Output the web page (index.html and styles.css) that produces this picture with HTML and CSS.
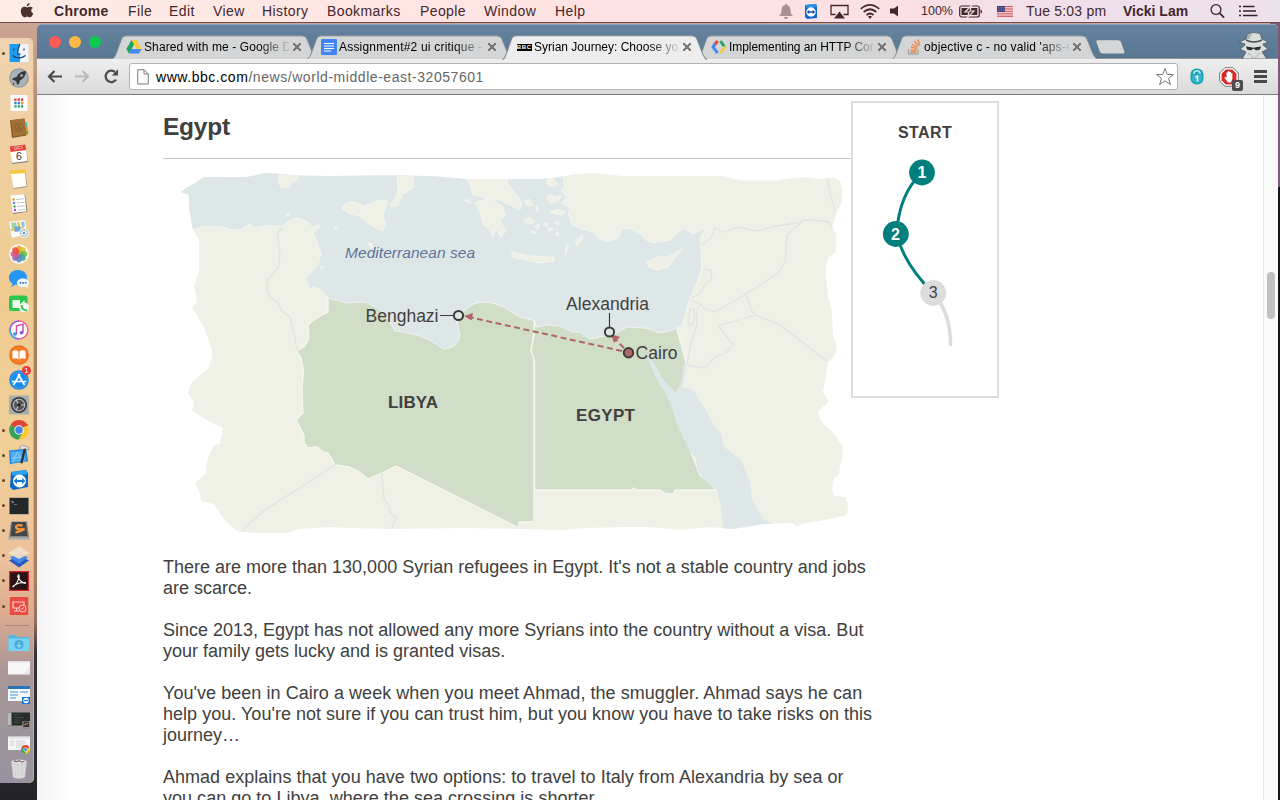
FILE: index.html
```html
<!DOCTYPE html>
<html lang="en">
<head>
<meta charset="utf-8">
<title>Syrian Journey: Choose your own escape route</title>
<link rel="stylesheet" href="styles.css">
</head>
<body>
<header class="menubar">
  <svg class="apple" width="14" height="17" viewBox="0 0 14 17"><path d="M9.6 1C9.7 2.700 8.300 4.300 6.800 4.200 6.700 2.600 8.100 1.200 9.600 1ZM12.900 6.100C10.400 7.600 10.900 10.500 13.300 11.500 12.700 13.200 11.500 15.400 10 15.400 9 15.400 8.700 14.800 7.400 14.800 6.100 14.800 5.600 15.400 4.700 15.400 2.700 15.300.7 11.800.8 8.800.9 6.100 2.600 4.700 4.400 4.700 5.600 4.700 6.400 5.400 7.300 5.400 8.200 5.400 9 4.600 10.500 4.700 11.500 4.800 12.300 5.200 12.900 6.100Z"/></svg>
  <nav class="menus"><b>Chrome</b><span>File</span><span>Edit</span><span>View</span><span>History</span><span>Bookmarks</span><span>People</span><span>Window</span><span>Help</span></nav>
  <div class="status">
    <svg width="16" height="17" viewBox="0 0 16 17" fill="#ab8f92"><path d="M8 1c1 0 1.300.6 1.300 1.300C11.500 3 12.500 5 12.500 7c0 3 .7 4.500 2.500 6H1c1.800-1.500 2.500-3 2.500-6 0-2 1-4 3.200-4.700C6.700 1.600 7 1 8 1ZM6 14h4c0 1.500-1 2-2 2s-2-.5-2-2Z"/></svg>
    <svg class="s-tv" width="14" height="17" viewBox="0 0 14 17"><path d="M1 2 12 1 13 3 13 15 3 16 1 14Z" fill="#1268cf"/><path d="M1 2 12 1 13 4 3 5Z" fill="#2592e6"/><circle cx="7" cy="9" r="4.700" fill="#fff"/><path d="m2.700 9 2.600-2v1.300h3.400V7l2.600 2-2.600 2V9.700H5.300V11Z" fill="#164a9e"/></svg>
    <svg class="s-air" width="19" height="17" viewBox="0 0 19 17"><path d="M5.500 11.500H1V2.500h17v9h-4.500" fill="none" stroke="#43272c" stroke-width="1.300"/><path d="m9.500 8.500 5.500 7H4Z" fill="#43272c"/></svg>
    <svg class="s-wifi" width="20" height="17" viewBox="0 0 20 17" fill="none" stroke="#43272c" stroke-width="1.700"><path d="M.8 5.800Q10-2.200 19.200 5.800M3.700 9Q10 3.500 16.300 9M6.500 12Q10 9 13.500 12"/><path d="m10 16-2-2.400q2-1.500 4 0Z" fill="#43272c" stroke="none"/></svg>
    <svg class="s-vol" width="10" height="14" viewBox="0 0 10 14"><path d="M0 4.500h4L8 1.500v11L4 9.500H0Z" fill="#43272c"/></svg>
    <span class="pct">100%</span>
    <svg class="s-bat" width="24" height="13" viewBox="0 0 24 13"><rect x=".7" y="1" width="19.600" height="11" rx="2" fill="none" stroke="#43272c" stroke-width="1.200"/><path d="M2.500 3h15.800v7H2.500Z" fill="#43272c"/><path d="M21.500 4.500c2 .3 2 3.700 0 4Z" fill="#43272c"/><path d="m12.500.5-6.500 6.500h4L8.500 12.500 15 6h-4Z" fill="#43272c" stroke="#f1dfe6" stroke-width="1.200"/></svg>
    <svg class="s-flag" width="16" height="11" viewBox="0 0 16 11"><path fill="#fff" d="M0 0h16v11H0z"/><path stroke="#c8434c" stroke-width=".9" d="M0 .5h16M0 2.200h16M0 3.900h16M0 5.600h16M0 7.300h16M0 9h16M0 10.600h16"/><path fill="#40427c" d="M0 0h8v6H0z"/><path d="M1 1.500h7M1 3h7M1 4.500h7" stroke="#9d9ebf" stroke-width=".6" stroke-dasharray=".8 .8"/></svg>
    <span class="clock">Tue 5:03 pm</span>
    <b class="user">Vicki Lam</b>
    <svg class="s-find" width="16" height="16" viewBox="0 0 16 16" fill="none" stroke="#43272c"><circle cx="6" cy="6.500" r="4.900" stroke-width="1.300"/><path d="m9.600 10.100 4.500 4.500" stroke-width="1.800"/></svg>
    <svg class="s-list" width="19" height="12" viewBox="0 0 19 12" stroke="#33222b" stroke-width="1.700"><path d="M0 1.500h2M0 6h2M0 10.500h2M4 1.500h11.500M4 6h13M4 10.500h14.500"/></svg>
  </div>
</header>
<div class="desktop">
  <aside class="dock">
    <div class="apps">
      <i class="on"><svg viewBox="0 0 20 20"><path fill="#eef4fb" d="M.5 1h19v18H.5z"/><path fill="#1d9bf0" d="M.5 1H11Q8.500 6 8.700 11H11v8H.5z"/><path d="M5 5.500v2M15 5.500v2M3.500 12.500Q10 17.500 16.500 12.500M11 1Q8.500 6 8.700 11H11.500" fill="none" stroke="#17385e" stroke-width="1.100"/></svg></i>
      <i><svg viewBox="0 0 20 20"><circle cx="10" cy="10" r="9.800" fill="#8e969a"/><circle cx="10" cy="10" r="8.700" fill="#a9b2b6"/><path d="M17 3c-5 0-8 3-9.500 6L4 10l-.8 2L6 12.500 7.500 14l.5 2.800 2-.8 1-3.500C14 11 16.800 8 17 3ZM6 14l-2 1.500V18z" fill="#35393c"/><circle cx="12.500" cy="7.500" r="1.300" fill="#b8bec1"/></svg></i>
      <i><svg viewBox="0 0 20 20"><rect x="1.500" y="2" width="17" height="16" rx="1" fill="#fff"/><path stroke="#e1322c" stroke-width="2.300" stroke-dasharray="2.300 1" d="M5.300 6.700h9.200"/><path stroke="#3478bf" stroke-width="2.300" stroke-dasharray="2.300 1" d="M5.300 10h9.200"/><path stroke="#22a565" stroke-width="2.300" stroke-dasharray="2.300 1" d="M5.300 13.300h9.200"/><path fill="#f6a21b" d="M12 8.900h2.300v2.300H12z"/></svg></i>
      <i><svg viewBox="0 0 20 20"><path fill="#57b8c9" d="m16 4 2 .3.500 5-2 .2z"/><path fill="#f08c3a" d="m16.500 9 2.200.2.500 5-2 .2z"/><path fill="#5fb345" d="m17 13 2 .2.200 3-2 .3z"/><path fill="#88592a" d="m1 2.200 14.500-1.700 2 17L3 20z"/><path fill="#a37238" d="m2.500 2 13-1.500 2 16L4 18.500z"/><circle cx="9.800" cy="9.300" r="4" fill="none" stroke="#8a6030"/><path d="M7.500 12q2.300-4 4.600 0M9.800 7v2.500" stroke="#8a6030" fill="none" stroke-width="1.500"/></svg></i>
      <i><svg viewBox="0 0 20 20"><path fill="#7c7770" d="m2 6 15-2 2 14-16 2z"/><path fill="#fcfcfc" d="m1 5 16-2 1.500 14L3 19z"/><path fill="#e4413e" d="m.8 2.500 15.500-2 .9 5.500-15.700 2z"/><text x="7" y="16" font-size="10.500" fill="#333">6</text><text x="5" y="5.500" font-size="4.500" fill="#fff" transform="rotate(-5 7 5)">OCT</text></svg></i>
      <i><svg viewBox="0 0 20 20"><path fill="#a8a291" d="m2 3 14-2 2.500 17-14 2z"/><path fill="#fffef8" d="m1.500 3 14-2 2 16-13 2z"/><path fill="#f6c63d" d="m1 1.700 15-1.200.5 3.500L1.500 5z"/></svg></i>
      <i><svg viewBox="0 0 20 20"><path fill="#77756f" d="m2 2 14-1.500 2.500 17L4 20z"/><path fill="#fff" d="m1.500 1.500 14-1.200 2 17L3.500 19z"/><path stroke="#c6c6c6" d="m7 5.500 8-.7M7.500 9l8-.7M8 12.500l8-.7M8.500 16l8-.7"/><g><circle cx="4.500" cy="5.500" r="1.200" fill="#f19027"/><circle cx="5" cy="9" r="1.200" fill="#3d82d8"/><circle cx="5.500" cy="12.500" r="1.200" fill="#4bad4b"/><circle cx="6" cy="16" r="1.200" fill="#a14dcd"/></g></svg></i>
      <i><svg viewBox="0 0 20 20"><path fill="#fafafa" d="m0 3 16-2 2 14-15 4z"/><path fill="#9fd3a0" d="m2 4 5-.7 1 5-5 1z"/><path stroke="#f3c547" stroke-width="2.300" d="m2 11 13-2M9 3l4 14"/><path fill="#69a9df" d="m5 8 6-1 1 5-6 1z"/><path fill="#8bc1eb" d="m12 3 3-.5 1 5-3 .5z"/><circle cx="15" cy="14" r="5" fill="#eef0f2"/><circle cx="15" cy="14" r="3.300" fill="none" stroke="#6f91b4" stroke-dasharray="1.500 .7"/><circle cx="15" cy="14" r="1.200" fill="#6391c6"/></svg></i>
      <i><svg viewBox="0 0 20 20"><circle cx="10" cy="10" r="9.800" fill="#fdfdfd"/><g fill-opacity=".88"><ellipse cx="10" cy="5.500" rx="3" ry="4" fill="#f59a22"/><ellipse cx="10" cy="5.500" rx="3" ry="4" fill="#d8c82b" transform="rotate(45 10 10)"/><ellipse cx="10" cy="5.500" rx="3" ry="4" fill="#77b73c" transform="rotate(90 10 10)"/><ellipse cx="10" cy="5.500" rx="3" ry="4" fill="#3fa98c" transform="rotate(135 10 10)"/><ellipse cx="10" cy="5.500" rx="3" ry="4" fill="#5487c5" transform="rotate(180 10 10)"/><ellipse cx="10" cy="5.500" rx="3" ry="4" fill="#9168b2" transform="rotate(225 10 10)"/><ellipse cx="10" cy="5.500" rx="3" ry="4" fill="#d5598c" transform="rotate(270 10 10)"/><ellipse cx="10" cy="5.500" rx="3" ry="4" fill="#ec4f3b" transform="rotate(315 10 10)"/></g></svg></i>
      <i><svg viewBox="0 0 20 20"><path d="M9 1c5 0 9 3 9 7.500S14 16 9 16q-1.500 0-2.700-.4L2.500 18l1-3.500C1 13 0 11 0 8.500 0 4 4 1 9 1Z" fill="#2596f1"/><path d="M14 9.500c3.300 0 6 1.800 6 4.300 0 1.200-.6 2.200-1.500 3l.5 2.500-3-1.500q-1 .3-2 .3c-3.300 0-6-1.800-6-4.300s2.700-4.300 6-4.300Z" fill="#f2f7fd"/><path d="M10.500 13.800h7" stroke="#367ac2" stroke-width="1.700" stroke-dasharray="1.700 1"/></svg></i>
      <i><svg viewBox="0 0 20 20"><rect y="1.500" width="18.500" height="15.500" rx="3" fill="#27c84b"/><path d="M3.500 6H11v8H3.500zM12 9.500 15.500 6v5z" fill="#ecfaef"/><circle cx="15" cy="13.500" r="5" fill="#f4f7f4"/><path d="M12.500 11q0 5 5.500 5.500" stroke="#37c455" stroke-width="1.800" fill="none"/></svg></i>
      <i><svg viewBox="0 0 20 20"><circle cx="10" cy="10" r="9" fill="#fff" stroke="#ef5c98" stroke-width="1.400"/><path d="M10 1a9 9 0 0 0 0 18" fill="none" stroke="#8b66dc" stroke-width="1.500"/><path d="M1 10a9 9 0 0 0 5 8" fill="none" stroke="#3cb5e8" stroke-width="1.500"/><path d="M7.500 14V5.800l6.500-1.500V12.500" fill="none" stroke="#d54fae" stroke-width="1.500"/><ellipse cx="6" cy="14" rx="2" ry="1.700" fill="#478fe8"/><ellipse cx="12.500" cy="12.800" rx="2" ry="1.700" fill="#845fe0"/></svg></i>
      <i><svg viewBox="0 0 20 20"><circle cx="10" cy="10" r="9.800" fill="#df681e"/><circle cx="10" cy="10" r="8.800" fill="#fa7e21"/><path d="M3.500 6Q7 4.500 9.500 6.500v8Q7 12.500 3.500 14ZM16.500 6Q13 4.500 10.500 6.500v8Q13 12.500 16.500 14Z" fill="#fff"/></svg></i>
      <i><svg viewBox="0 0 20 20"><circle cx="10" cy="10" r="9.800" fill="#1b83e5"/><circle cx="10" cy="10" r="8" fill="#168bec" stroke="#62b5f4" stroke-width=".6"/><path d="m11 4-6.500 11M9 4l6.500 11M3 11.500h14" stroke="#fff" stroke-width="1.700"/></svg><em>1</em></i>
      <i><svg viewBox="0 0 20 20"><path fill="#a9adae" d="M0 .5h20v19H0z"/><circle cx="10" cy="10" r="8" fill="#333638"/><circle cx="10" cy="10" r="5.800" fill="#555" stroke="#b0b2b3" stroke-width="1.300"/><path d="m10 10-3-5M10 10l6 0M10 10l-3 5" stroke="#c8caca" stroke-width="1.200"/><circle cx="10" cy="10" r="1.800" fill="#222"/></svg></i>
      <i class="on"><svg viewBox="0 0 20 20"><circle cx="10" cy="10" r="9.800" fill="#fbcb2d"/><path d="M10 10 1.500 5A9.800 9.800 0 0 1 18.500 5Z" fill="#dd4638"/><path d="M10 10 1.500 5A9.800 9.800 0 0 0 9.500 19.800L14 12Z" fill="#35a35a"/><path d="M10 5h8.500" stroke="#dd4638" stroke-width="2"/><circle cx="10" cy="10" r="4.700" fill="#f5f5f3"/><circle cx="10" cy="10" r="3.700" fill="#4284e6"/></svg></i>
      <i class="on"><svg viewBox="0 0 22 20"><path fill="#1987de" d="m0 5 19-2 2 14L1 20z"/><path fill="#50aef1" d="m1.500 6.500 16-1.500 1 11.500-16 2z"/><path d="m4 18 5-11 6 9M3 13.500l14-1.500" stroke="#a4d7f9" stroke-width=".8" fill="none"/><path d="m17.500 3-4 16" stroke="#2d3136" stroke-width="2.600"/><path d="m11 2 4-2.500 6.500 2 .5 3-4-1.500L14 4z" fill="#e4e6e7" stroke="#656a6d" stroke-width=".6"/></svg></i>
      <i class="on"><svg viewBox="0 0 20 20"><path fill="#0868c7" d="M2 2 17 0l2 3v14L4 20l-3-3z"/><path fill="#2ba3ee" d="m2 2 15-2 2 4L4 6z"/><circle cx="10.500" cy="11" r="6.500" fill="#fff"/><path d="m4.500 11 3.500-3v2h5V8l3.500 3-3.500 3v-2H8v2z" fill="#147bd1"/></svg></i>
      <i class="on"><svg viewBox="0 0 20 20"><path fill="#92928c" d="M0 1.500h20v17H0z"/><path fill="#242728" d="M.8 2h18.400v16H.8z"/><text x="2" y="7.500" font-size="5" fill="#eee">&gt;_</text></svg></i>
      <i class="on"><svg viewBox="0 0 20 20"><path fill="#8b8983" d="M2 .5h16l2.500 18.500H-.5z"/><path fill="#b7b4ad" d="M0 16.500h20l.5 2.500H-.5z"/><path fill="#44474a" d="M3 1h14l1.500 14h-17z"/><path d="M13.500 4.700Q7 3.300 7 6t6 2.200-6.500 3.300" fill="none" stroke="#f7933a" stroke-width="2.300"/></svg></i>
      <i class="on"><svg viewBox="0 0 20 20"><path fill="#245ac2" d="m0 14.500 10-5 10 5-10 7z"/><path fill="#4589e8" d="m1 11.500 9-5 9 5-9 6z"/><path fill="#f1dfc7" fill-opacity=".95" d="m-1 7 11-7 11 7-11 6z"/></svg></i>
      <i class="on"><svg viewBox="0 0 20 20"><path fill="#dc2233" d="M0 0h20v20H0z"/><path fill="#281315" d="M1.200 1.200h17.600v17.600H1.200z"/><path d="M9 4c2.500-1 1 7-4.500 11.500C2 17 7 11 16 11.500c3 1.500-5 1.500-7.500-7" fill="none" stroke="#fff" stroke-width="1.100"/></svg></i>
      <i class="on"><svg viewBox="0 0 20 20"><path fill="#e94b43" d="M.8 1h18.400v18H.8z"/><path d="M10 12H4V6h11v3M5 15h5M7.500 12v3" fill="none" stroke="#ffd0c8" stroke-width="1.200"/><circle cx="13.500" cy="12.500" r="3.500" fill="none" stroke="#ffd0c8"/><path d="m12 13.500 3-2" stroke="#ffd0c8"/></svg></i>
    </div>
    <hr>
    <div class="apps stacks">
      <i><svg viewBox="0 0 22 20"><path fill="#53b6df" d="M.5 2h7l2 2h12v14H.5z"/><path fill="#78d2f3" d="M.5 5.500h21V18H.5z"/><circle cx="11" cy="11.500" r="4.500" fill="#47abd5"/><path d="M11 9v5M8.800 12 11 14.200 13.200 12" stroke="#92dcf5" fill="none" stroke-width="1.200"/></svg></i>
      <i><svg viewBox="0 0 22 20"><path fill="#f7f7f8" d="M0 3h22v13.500H0z"/><path fill="#dde1e6" d="M0 3h22v1.500H0z"/><path d="M13 16q5-1 9-8v8Z" fill="#e8e8ea"/></svg></i>
      <i><svg viewBox="0 0 22 20"><path fill="#f5f9fc" d="M0 2h22v15H0z"/><path fill="#2b75bd" d="M0 2h22v3H0z"/><path d="M2 8h8M2 11h8M12 8h8M2 14h6" stroke="#83b4de" stroke-width="1.400"/><path fill="#1776d5" d="M14 13h8v7h-8z"/><circle cx="18" cy="16.500" r="2.700" fill="#fff"/><path d="M16 16.500h4" stroke="#1776d5" stroke-width="1.200"/></svg></i>
      <i><svg viewBox="0 0 22 20"><path fill="#262c29" d="M0 3.500h22v13H0z"/><path fill="#b9bbb8" d="M0 3.500h3.500v13H0z"/><path d="M6 6h6M6 8.500h10M6 11h7M6 13.500h5" stroke="#4d5749" stroke-width=".8"/><path fill="#8b8b8b" d="M14.500 12H22v8h-8z"/><path fill="#373737" d="M15.500 12.500h5.500v5.500h-5.500z"/><path d="m16.500 15.500 3.500-1" stroke="#ec9042"/></svg></i>
      <i><svg viewBox="0 0 22 20"><path fill="#f4f4f4" d="M0 2.500h22v13.500H0z"/><path d="M1 4h20" stroke="#d5d9e1"/><path d="M2 7h4M2 9h4M2 11h4M8 7h9M8 9h10M8 11h8M8 13h6" stroke="#c5c5c5" stroke-width=".7"/><circle cx="17.500" cy="15.500" r="4.300" fill="#efc431"/><path d="M13.600 13.500a4.300 4.300 0 0 1 7.800 0l-3.900 2Z" fill="#dc4437"/><path d="M13.600 13.500a4.300 4.300 0 0 0 3.400 6.300l.5-4.300Z" fill="#39a05a"/><circle cx="17.500" cy="15.500" r="1.800" fill="#4482dc" stroke="#fff" stroke-width=".6"/></svg></i>
      <i><svg class="bin" viewBox="0 0 20 22"><path d="M1.500 3h17l-2 17.500q-6.500 2.500-13 0Z" fill="#dedddd" stroke="#b9b7b9" stroke-width=".7"/><path d="m5 5 1 14M9 5v15M13 5l-1 15M16 5l-2 14" stroke="#cbcacb" stroke-width=".8"/><ellipse cx="10" cy="3" rx="8.500" ry="2.500" fill="#f0efef" stroke="#aaa" stroke-width=".5"/><path d="m4 3 2-1 2 1 2-1.500 3 2 3-1" stroke="#7a6262" fill="none" stroke-width="1.200"/></svg></i>
    </div>
  </aside>
  <main class="window">
    <div class="tabstrip">
      <div class="lights"><i class="r"></i><i class="y"></i><i class="g"></i></div>
      <div class="tabs">
        <div class="tab"><svg class="shape" viewBox="0 0 205 24" preserveAspectRatio="none"><path d="M.5 24Q3 22 4 19L9.500 4Q10.500.8 14 .8H190Q193.500.8 195 4L201 19Q202.500 22 205 24"/></svg>
          <svg class="fav" viewBox="0 0 16 16"><path d="M5.500 1h5l5 9h-5z" fill="#f9ce34"/><path d="m5.500 1 2.600 4.500L3 14.500.4 10z" fill="#1da362"/><path d="M5.500 10H15.600L13 14.500H3z" fill="#4688f4"/></svg><span class="t1">Shared with me - Google D</span><b class="x"></b></div>
        <div class="tab"><svg class="shape" viewBox="0 0 205 24" preserveAspectRatio="none"><path d="M.5 24Q3 22 4 19L9.500 4Q10.500.8 14 .8H190Q193.500.8 195 4L201 19Q202.500 22 205 24"/></svg>
          <svg class="fav" viewBox="0 0 16 16"><rect width="16" height="16" rx="1" fill="#4286f5"/><path d="M3 4.500h10M3 7h10M3 9.500h10M3 12h7" stroke="#fff" stroke-width="1.200"/></svg><span class="t2">Assignment#2 ui critique -</span><b class="x"></b></div>
        <div class="tab active"><svg class="shape" viewBox="0 0 205 24" preserveAspectRatio="none"><path d="M.5 24Q3 22 4 19L9.500 4Q10.500.8 14 .8H190Q193.500.8 195 4L201 19Q202.500 22 205 24"/></svg>
          <span class="fav bbc"><u>B</u><u>B</u><u>C</u></span><span class="t3">Syrian Journey: Choose yo</span><b class="x"></b></div>
        <div class="tab"><svg class="shape" viewBox="0 0 205 24" preserveAspectRatio="none"><path d="M.5 24Q3 22 4 19L9.500 4Q10.500.8 14 .8H190Q193.500.8 195 4L201 19Q202.500 22 205 24"/></svg>
          <svg class="fav" viewBox="0 0 16 16" fill="none" stroke-width="3"><path d="M6.500 2 3.500 6" stroke="#e34c3c"/><path d="M4 5 2 8 6.500 14" stroke="#4a88ee"/><path d="M9.500 2 13.500 8" stroke="#23a566"/><path d="M14 7.500 9.500 14" stroke="#f5c840"/></svg><span class="t4">Implementing an HTTP Cor</span><b class="x"></b></div>
        <div class="tab"><svg class="shape" viewBox="0 0 205 24" preserveAspectRatio="none"><path d="M.5 24Q3 22 4 19L9.500 4Q10.500.8 14 .8H190Q193.500.8 195 4L201 19Q202.500 22 205 24"/></svg>
          <svg class="fav" viewBox="0 0 16 16" fill="none"><path d="M2.500 10v5h9.500v-5" stroke="#a5a6a9" stroke-width="1.400"/><path d="M4.500 13h6M4.500 10.800l6 .5M5 8l6 1.700M6 5.200l5.500 3M8.500 2.200l4 5M12 .5l1.500 6" stroke="#ed833a" stroke-width="1.300"/></svg><span class="t5">objective c - no valid 'aps-e</span><b class="x"></b></div>
        <svg class="newtab" width="31" height="16" viewBox="0 0 31 16"><path d="M3 .7H23Q25.500.7 26.500 3L30 13Q30.500 15 28 15H8Q5.500 15 4.500 13L.8 3Q0 .7 3 .7Z" fill="#d5d6d7" stroke="#60768a"/></svg>
      </div>
      <svg class="incognito" width="34" height="28" viewBox="0 0 34 28"><path d="M5 28 9 21 3 18 7.500 14.500 8 13 2 11 9 8 11 2.500Q17 .5 23 2.500L25 8 31.500 11 26 13 26.500 14.500 31 18 25 21 30 28Z" fill="#dcdddd" stroke="#4d5a66" stroke-width=".8"/><path d="m11 3 4 0-3 5-2.500 0Z" fill="#b0b2b3"/><path d="M9 9q8 4 16 0" fill="none" stroke="#4a4c4e" stroke-width="1.500"/><path d="M9 15.500q4 .5 7.500 1.300 3.500-.8 7.500-1.300l-1 3q-4 2-6-.8h-1q-2 2.800-6 .8Z" fill="#303234"/><path d="m11 22 6 5.500 6-5.500" fill="none" stroke="#a9abad"/></svg>
    </div>
    <div class="toolbar">
      <svg width="78" height="22" viewBox="0 0 78 22" fill="none"><path d="M1.500 10.500H15M7.500 5 2 10.500 7.500 16" stroke="#4b4b4b" stroke-width="2.200"/><path d="M28 10.500H41M35.500 5l5.500 5.500L35.500 16" stroke="#bbb" stroke-width="2.100"/><path d="M69 13.700A5.700 5.700 0 1 1 68 6" stroke="#4b4b4b" stroke-width="2.300"/><path d="M71 3.300V9.500h-6.200z" fill="#4b4b4b"/></svg>
      <div class="omni">
        <svg width="12" height="16" viewBox="0 0 12 16"><path d="M.7.700H7L11.300 5V15H.7ZM7 .7V5H11.300" fill="#fafafa" stroke="#7c7c7c"/></svg>
        <span class="url">www.bbc.com<small>/news/world-middle-east-32057601</small></span>
        <svg class="star" width="20" height="20" viewBox="0 0 20 20"><path d="m10 1.500 2.300 6h6.200l-5 3.900 1.900 6.100L10 13.900l-5.400 3.600 1.900-6.100-5-3.900h6.200Z" fill="#fff" stroke="#777"/></svg>
      </div>
      <svg class="lock" width="14" height="17" viewBox="0 0 14 17"><rect x=".5" y=".5" width="13" height="16" rx="6" fill="#1ba0b8"/><path d="M4 6V5.500q0-2.700 3-2.700t3 2.700V6" stroke="#bfe9f0" stroke-width="1.600" fill="none"/><path d="M2 7h10v4q0 4-5 4t-5-4Z" fill="#31b4c8"/><path d="M5.500 9.500 7.500 8v5.500" fill="none" stroke="#fff" stroke-width="1.500"/></svg>
      <div class="block"><svg width="20" height="20" viewBox="0 0 20 20"><path d="M6 .7h8l5.300 5.300v8L14 19.300H6L.7 14V6Z" fill="#fff" stroke="#555" stroke-width=".8"/><path d="M6.800 2.600h6.400l4.200 4.200v6.400l-4.200 4.200H6.800l-4.200-4.200V6.800Z" fill="#da2726"/><path d="M6 9.500 7.500 11V5.500h1.400V4h1.500v1h1.500v1.200h1.500V12l-1.500 3.500H9L5.500 11Z" fill="#fff"/></svg><span>9</span></div>
      <div class="burger"></div>
    </div>
    <div class="viewport">
      <div class="page">
        <article>
          <h1>Egypt</h1>
          <svg class="map" width="690" height="380" viewBox="163 160 690 380">
            <defs><clipPath id="paper"><path d="M181 192C186 187 195 184 203 177.500 220 176 235 178 248 176.700 256 176 262 173 268 173L298 175.500 330 176 395 175.300 435 176.300Q450 178 465 179L500 179.300 540 179Q555 178 567 175.500 580 173 593 173L623 176 723 176Q736 180 747 180.500L777 180.500Q790 178 803 177L817 179 833 177.500Q841 180 841 184 844 198 841 204L837 212 832 227Q837 232 836 240 837 250 834 254L828 258Q825 268 826 277L828 295 832 312 833 335 837 347Q836 357 828 362L826 375 823 392 829 402 818 411Q818 418 823 423L835 435 843 447 842 460Q839 468 839 475 833 477 832.500 484 832 495 835 496L845 497Q848 502 848 508 848 515 843 516L820 521 801 524 797 527 792 523 763 524 733 529 710 527 680 530 650 527 625 527 585 528 560 530 520 529 465 528 388 529 350 528 328 527 298 529 288 533 255 533 237 531Q230 526 225 520 218 511 214 504L201 501 200 493 195 483 206 474Q206 466 207 463 209 452 215 445L220 444 223 428 205 419 192 411 194 402 188 393 192 382 207 370Q213 360 212 350L205 330 198 317 192 307 197 302 194 285 199 272Q199 250 199 240L193 230 189 208 189 195Z"/></clipPath></defs>
            <g clip-path="url(#paper)">
              <path d="M163 160h690v380H163Z" fill="#eff0e6"/>
              <g fill="#d0ddc7" stroke="#f6f7f1" stroke-width="1.300" stroke-linejoin="round">
                <path d="M328 290 535 290 535 321 532 348 534 361V522H519V528L396 466 382 473 368 479 358 471 349 467 335 465 332 459 328 453 325 453 317 447 308 448 304 443 304 435 296 420 303 413 302 390 303.500 370 301 358 296.500 351 305 346 309 338 308 325 315 319 328 312Z"/>
                <path d="M535 290H677V330L686 362 682 400 672 405 700 475 717 490H675L673 494H666L660 490H534.500V361L531 350 534 336Z"/>
              </g>
              <path d="M163 160H560L565 187 561 190 567 197 562 203 570 208 568 214 572 224 578 228 593 232 598 238 607 242 618 238 622 228 630 229 640 233 646 240 653 243 670 240 683 228 693 234 706 228 700 238 701 248 702 268 697 282 690 298 682 325 677 328Q666 334 657 332 650 328 643 328L627 327 618 332Q613 339 604 336L590 339 580 332 572 332 560 326 550 325 536 327 535 321 520 317 505 308Q493 302 485 302 473 302 468 308L459 315 457 322 460 335Q457 349 443 349L436 344Q422 334 395 331L388 319 380 309 365 302 347 303 328 298 322 291 315 287 310 289 305 278 312 271 318 265 321 253 315 237 313 233 321 226 316 225 312 228 308 222 298 218 290 220 283 226 265 226 255 228 250 224 240 230 233 230 222 227 203 226 193 230 163 230Z" fill="#dee7e7" stroke="#f5f7f4" stroke-width=".8"/>
              <path d="M647 356 655 364 662 378 675 392 680 386 684 364 686.500 362 684 382 682 387 688 388 695 392 700 402 707 412 713 424 721 434 724 447 733 454 741 460 750 482 752 500 763 519 772 523 760 540H724L721 507 717 490 703 479 697 468 696 458 690 452 677 425 671 405 665 393 654 374Z" fill="#dee7e7"/>
              <g fill="#eff0e6" stroke="#f4f6f1" stroke-width=".8" stroke-linejoin="round">
                <path d="M280 170H298V180L292 183 289 187 282 188 278 183ZM397 170H413L414 187 407 192 403 193 398 206 390 206 398 193ZM342 208 346 203 355 202 364 206 380 200 388 201 383 215 385 223 383 231 372 226 359 216 348 213ZM465 174H506L508 184 515 192 522 203 520 210 510 205 500 200 489 200 480 196 473 195 471 187ZM475 202 489 199 503 206 505 215 500 221 506 231 501 237 496 229 493 237 488 227 483 225 480 212ZM512 252 530 256 554 257 554 261 540 263 526 260 512 257ZM647 262 657 257 668 257 682 249 672 262 668 267 657 270 649 267ZM576 246 576 240 583 235 582 240ZM547 180 553 178 558 184 552 187 547 184Z"/>
                <path d="M547 196l5-2 2 3 7-1-2 5-9 2zM524 201l5-2 4 6-5 1zM536 206l3 3-2 3zM550 212l7-3 9 3-3 3-8-1zM524 220l6-3 5 4-3 3-7-1zM535 226l4-2-1 6zM543 224l4-1 1 4zM554 222l5 0-1 3zM530 232l5-1 1 3zM547 229l6-1-2 3zM555 234l4-2-1 4zM566 248l2-4 0 6-3 5zM463 200l7 0 0 3zM367 243l4 0 3 6-3-2zM320 268l4-2-2 3zM334 229l2-2 1 2zM286 215l3-2-1 3z"/>
              </g>
              <g fill="none" stroke="#dee5e4" stroke-width="1.300" stroke-linejoin="round">
                <path d="M283 227 277 234 280 254 278 268 268 279 267 288 270 297 278 303 282 311 290 317 294 334 297 350M335 465 262 512 241 532M382 474 384 499 390 508 389 511 396 518 391 529"/>
                <path d="M702 245 711 238 715 228 725 232 738 227 755 231 777 226 797 223 803 220 815 220 828 222 833 228M827 178 831 197 835 210M803 221 787 235 785 262 778 273 746 294 715 312 705 309 700 304 690 300M703 269 711 270 712 278 704 286 700 294 691 298M746 294 752 311 755 315 718 326 733 344 727 352 715 357 705 368 687 365M755 315 780 325 828 362M701 303 697 310 697 325 694 333 690 349 687 363M690 310 694 308 694 323 690 326 688 321Z"/>
              </g>
              <path d="m631 489 4-2v2Z" fill="#fafaf5"/>
            </g>
            <g stroke="#b3646b" stroke-width="2" stroke-dasharray="6 3.500" fill="none"><path d="M622 351 471 317.500M624 348 615 339"/></g>
            <path d="m464 316 9-3-1.500 7.500ZM611 334l9 3-6 6Z" fill="#b3646b"/>
            <path d="M440 315.500h14M609.500 313v14" stroke="#3c3c3c" stroke-width="1.200"/>
            <g fill="#dfe7e3" stroke="#3b3b3b" stroke-width="2"><circle cx="458.500" cy="315.500" r="4.600"/><circle cx="609.500" cy="332" r="4.600"/><circle cx="628.500" cy="352.800" r="4.700" fill="#b3646b"/></g>
            <g fill="#404040" font-size="17.500"><text x="365.500" y="322" textLength="73">Benghazi</text><text x="566" y="310" textLength="83">Alexandria</text><text x="635.500" y="359" textLength="42">Cairo</text>
            <g font-weight="bold" font-size="17"><text x="388" y="408" textLength="50">LIBYA</text><text x="576" y="421" textLength="59">EGYPT</text></g>
            <text x="345" y="258" textLength="130" font-size="15.500" font-style="italic" fill="#5f739b">Mediterranean sea</text></g>
          </svg>
          <div class="story">
            <p>There are more than 130,000 Syrian refugees in Egypt. It's not a stable country and jobs<br>are scarce.</p>
            <p>Since 2013, Egypt has not allowed any more Syrians into the country without a visa. But<br>your family gets lucky and is granted visas.</p>
            <p><span class="loose">You've been in Cairo a week when you meet Ahmad, the smuggler. Ahmad says he can</span><br><span class="open">help you. You're not sure if you can trust him, but you know you have to take risks on this</span><br>journey…</p>
            <p class="open">Ahmad explains that you have two options: to travel to Italy from Alexandria by sea or<br>you can go to Libya, where the sea crossing is shorter.</p>
          </div>
        </article>
        <aside class="progress">
          <h2>START</h2>
          <svg width="144" height="200" viewBox="853 155 144 200"><path d="M922 172.500Q899 194 896.500 234 904 264 933 293" fill="none" stroke="#007f7d" stroke-width="3"/><path d="M933 293Q951 313 950.500 346" fill="none" stroke="#dcdcdc" stroke-width="3.500"/><g fill="#007f7d"><circle cx="922" cy="172.500" r="12.900"/><circle cx="895.800" cy="234" r="12.900"/></g><circle cx="933.200" cy="293" r="12.900" fill="#dcdcdc"/><g font-size="16" text-anchor="middle" font-weight="bold" fill="#fff"><text x="922" y="178">1</text><text x="895.500" y="239.500">2</text><text x="933.300" y="298.300" fill="#404040" font-weight="normal">3</text></g></svg>
        </aside>
      </div>
      <div class="scroll"><i></i></div>
    </div>
  </main>
</div>
</body>
</html>
```
FILE: styles.css
```css
* { box-sizing: border-box; }
body { margin: 0; width: 1280px; height: 800px; overflow: hidden; font-family: "Liberation Sans", Arial, sans-serif; color: #404040; display: flex; flex-direction: column; }
svg { display: block; flex: none; }
i, em { font-style: normal; }

/* menu bar */
.menubar { height: 23px; flex: none; display: flex; padding-left: 20px; background: linear-gradient(90deg, #fdece3, #ffe4e3 35%, #fde0e3 68%, #eedfea 85%, #ece2ee); border-bottom: 1px solid #734952; color: #43272c; font-size: 14px; line-height: 22px; }
.apple { margin-top: 2px; fill: #48302e; }
.menus { margin-left: 20px; display: grid; grid-template-columns: 74px 41px 44px 49px 65px 93px 64px 71px 35px; white-space: nowrap; letter-spacing: .4px; }
.menus b { letter-spacing: .3px; }
.status { margin-left: 188px; display: flex; align-items: center; white-space: nowrap; }
.s-tv { margin-left: 10px; }
.s-air { margin-left: 12px; }
.s-wifi { margin-left: 11px; }
.s-vol { margin-left: 10px; }
.pct { width: 38px; margin-left: 21px; font-size: 12.500px; }
.s-flag { margin-left: 14px; }
.clock { width: 97px; margin-left: 13px; letter-spacing: .2px; }
.user { width: 87px; letter-spacing: 0; }
.s-list { margin-left: 13px; }

/* desktop and dock */
.desktop { flex: 1; display: flex; min-height: 0; background: linear-gradient(90deg, transparent 1270px, #7e5875 1270px) 0 0 / 100% 164px no-repeat, linear-gradient(90deg, transparent 1270px, #15131b 1270px), linear-gradient(#cba693, #b58b6e 12%, #aa825c 30%, #ad7c60 72%, #94705f 77%, #38343b 81%, #22222b); }
.dock { width: 34px; height: 745px; margin: 15px 3px 0 0; padding-top: 2.500px; flex: none; border-radius: 0 5px 5px 0; background: linear-gradient(#efd3b2, #f0d0a0 15%, #efcb91 35%, #f0d098 55%, #ecc19b 70%, #deac91 77%, #aa9796 85%, #9b949d 94%, #9a91a0); box-shadow: inset -1px 0 #d2ae86; }
.apps { display: grid; grid-auto-rows: 25.15px; }
.apps i { position: relative; display: flex; align-items: center; justify-content: center; padding-left: 3px; }
.apps svg { width: 20px; height: 20px; overflow: visible; }
.stacks svg { width: 22px; }
.stacks .bin { width: 18px; height: 22px; }
.apps .on::before { content: ""; position: absolute; left: 2px; top: 11px; width: 3px; height: 3px; border-radius: 50%; background: #63441f; }
.apps em { position: absolute; right: 3px; top: -1px; width: 9px; height: 9px; border-radius: 50%; background: #e83b3c; color: #fff; font: 7px/9px "Liberation Sans", sans-serif; text-align: center; }
.dock hr { margin: 6px 5px 5px; border: 0; height: 1px; background: #b18772; }

/* browser window */
.window { width: 1241px; margin-top: 1px; display: flex; flex-direction: column; border-radius: 5px 5px 0 0; overflow: hidden; background: #fff; }
.tabstrip { height: 35px; flex: none; display: flex; background: linear-gradient(#65839f, #587792); border-top: 1px solid #8ba1b5; border-bottom: 1px solid #8d9297; }
.lights { display: flex; gap: 8px; padding: 11px 0 0 12px; width: 75px; }
.lights i { width: 12px; height: 12px; border-radius: 50%; }
.r { background: #ff5b56; } .y { background: #fdb945; } .g { background: #0bca51; }
.tabs { display: flex; margin-top: 10px; height: 24px; }
.tab { position: relative; width: 205px; margin-right: -10px; display: flex; align-items: center; padding-left: 14px; font-size: 12px; color: #000; }
.tab .shape { position: absolute; inset: 0; width: 205px; height: 24px; z-index: 0; fill: #d4d5d6; stroke: #7f8890; }
.tab.active { z-index: 2; margin-bottom: -1px; padding-bottom: 1px; }
.active .shape { fill: #ededed; height: 25px; }
.fav { position: relative; width: 16px; height: 16px; }
.tab span:not(.fav) { position: relative; width: 145px; margin-left: 2px; white-space: nowrap; -webkit-mask-image: linear-gradient(90deg, #000 115px, transparent 148px); mask-image: linear-gradient(90deg, #000 115px, transparent 148px); }
.t1 { letter-spacing: .1px; }
.t2 { letter-spacing: .2px; }
.t4 { letter-spacing: -.05px; }
.t5 { letter-spacing: .15px; }
.bbc { display: flex; align-items: center; justify-content: center; gap: 0; }
.bbc u { width: 5px; height: 7px; background: #000; color: #fff; font: bold 6px/7px "Liberation Sans", sans-serif; text-decoration: none; text-align: center; }
.x { position: relative; width: 8px; height: 8px; margin-left: 4px; background: linear-gradient(45deg, transparent 42%, #777 42% 58%, transparent 58%), linear-gradient(-45deg, transparent 42%, #777 42% 58%, transparent 58%); }
.newtab { margin: 4px 0 0 8px; }
.incognito { margin: 6px 7px 0 auto; }
.toolbar { height: 36px; flex: none; display: flex; align-items: center; padding-left: 10px; background: linear-gradient(#efefef, #dadada); border-bottom: 1px solid #7c7c7c; }
.omni { width: 1049px; height: 27px; margin-left: 4px; display: flex; align-items: center; padding-left: 7px; background: #fff; border: 1px solid #b2b2b2; border-radius: 3px; }
.url { margin-left: 7px; color: #000; font-size: 14px; letter-spacing: .55px; }
.url small { font-size: inherit; color: #666; }
.star { margin-left: auto; margin-right: 2px; }
.lock { margin-left: 12px; }
.block { position: relative; margin-left: 15px; }
.block span { position: absolute; left: 13px; top: 13px; width: 11px; height: 11px; background: #4b4b4b; border-radius: 2px; color: #fff; font: bold 9px/11px "Liberation Sans", sans-serif; text-align: center; }
.burger { width: 13px; height: 13px; margin-left: 15px; background: repeating-linear-gradient(#484848 0 3px, transparent 3px 5px); }

/* page */
.viewport { flex: 1; display: flex; min-height: 0; }
.page { width: 1226px; display: flex; padding-left: 126px; background: linear-gradient(90deg, #f4f4f4, #fff 36px); overflow: hidden; }
article { width: 688px; flex: none; }
h1 { margin: 0; height: 64px; padding-top: 18px; font-size: 24.500px; letter-spacing: -.25px; line-height: 28px; border-bottom: 1px solid #c8c8c8; }
.map { margin-top: 1px; }
.story { padding-top: 17px; font-size: 18px; line-height: 21px; white-space: nowrap; }
.story p { margin: 0 0 21px; }
.loose { letter-spacing: .05px; }
.open { letter-spacing: .025px; }
.progress { position: relative; width: 148px; height: 297px; margin-top: 6px; border: 2px solid #dcdcdc; background: #fff; }
h2 { margin: 0; height: 52px; padding-top: 20px; font-size: 16px; line-height: 20px; letter-spacing: .4px; text-align: center; }
.scroll { width: 15px; background: #fafafa; border-left: 1px solid #e7e7e7; padding: 177px 0 0 3px; }
.scroll i { display: block; width: 8px; height: 47px; border-radius: 4px; background: #c1c1c1; }
```
